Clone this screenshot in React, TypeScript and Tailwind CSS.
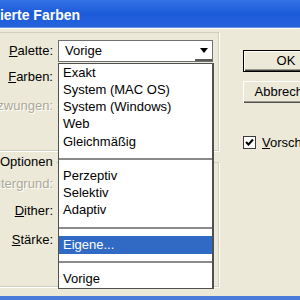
import React from "react";

const items: { t: string; kind?: "sep" | "sel" }[] = [
  { t: "Exakt" },
  { t: "System (MAC OS)" },
  { t: "System (Windows)" },
  { t: "Web" },
  { t: "Gleichmäßig" },
  { t: "", kind: "sep" },
  { t: "Perzeptiv" },
  { t: "Selektiv" },
  { t: "Adaptiv" },
  { t: "", kind: "sep" },
  { t: "Eigene...", kind: "sel" },
  { t: "", kind: "sep" },
  { t: "Vorige" },
];

function Label({ children, disabled }: { children: React.ReactNode; disabled?: boolean }) {
  return (
    <div className="w-[53px] shrink-0 flex justify-end">
      <span
        className={
          "whitespace-nowrap shrink-0 " +
          (disabled ? "text-[#aca899] [text-shadow:1px_1px_0_#ffffff]" : "text-black")
        }
      >
        {children}
      </span>
    </div>
  );
}

export default function App() {
  return (
    <div className="w-[300px] h-[300px] overflow-hidden relative bg-[#ece9d8] text-[13px] leading-[16px] font-['Liberation_Sans',Arial,sans-serif]">
      {/* title bar */}
      <div className="h-[28px] bg-linear-to-b from-[#3372e6] via-[#1c5bd8] to-[#2563de] flex items-center overflow-hidden border-b border-[#6b95e0]">
        <span className="ml-[-32px] mt-[2px] text-white font-bold text-[14px] whitespace-nowrap">
          Indizierte Farben
        </span>
      </div>

      {/* body */}
      <div className="flex h-[268px] border-t border-white">
        {/* left column */}
        <div className="w-[219px] shrink-0 flex flex-col pt-[3px]">
          {/* group 1 */}
          <div className="w-[223px] -ml-[4px] h-[119px] border border-[#d0d0bf] shadow-[1px_1px_0_#ffffff] pl-[3px] pt-[7px] flex flex-col">
            <div className="h-[22px] flex items-center">
              <Label>
                <span className="underline">P</span>alette:
              </Label>
              <div className="ml-[5px] w-[155px] h-[22px] bg-white border border-[#707070] flex items-center">
                <span className="pl-[6px] flex-1">Vorige</span>
                <div className="w-[17px] h-[20px] bg-white border-b-2 border-[#5a5a5a] flex items-center justify-center">
                  <svg width="8" height="5" viewBox="0 0 8 5">
                    <polygon points="0,0 8,0 4,5" fill="#000" />
                  </svg>
                </div>
              </div>
            </div>
            <div className="h-[22px] mt-[4px] flex items-center">
              <Label>
                <span className="underline">F</span>arben:
              </Label>
            </div>
            <div className="h-[22px] mt-[7px] flex items-center">
              <Label disabled>Erzwungen:</Label>
            </div>
          </div>

          {/* group 2 */}
          <div className="w-[223px] -ml-[4px] mt-[11px] h-[125px] border border-[#d0d0bf] shadow-[1px_1px_0_#ffffff] pl-[3px] flex flex-col">
            <div className="-mt-[9px] h-[16px] flex">
              <span className="bg-[#ece9d8] pr-[3px] whitespace-nowrap">Optionen</span>
            </div>
            <div className="h-[22px] mt-[3px] flex items-center">
              <Label disabled>Hintergrund:</Label>
            </div>
            <div className="h-[22px] mt-[5px] flex items-center">
              <Label>
                <span className="underline">D</span>ither:
              </Label>
            </div>
            <div className="h-[22px] mt-[7px] flex items-center">
              <Label>
                <span className="underline">S</span>tärke:
              </Label>
            </div>
          </div>
        </div>

        {/* right column */}
        <div className="flex-1 flex flex-col pl-[24px]">
          <button className="mt-[21px] w-[86px] h-[22px] shrink-0 bg-[#ece9d8] border border-black shadow-[inset_1px_1px_0_#ffffff,inset_-1px_-1px_0_#404040,inset_-2px_-2px_0_#9a9a8c] flex items-center justify-center">
            OK
          </button>
          <button className="mt-[9px] w-[86px] h-[22px] shrink-0 bg-[#ece9d8] shadow-[inset_1px_1px_0_#ffffff,inset_-1px_-1px_0_#505050,inset_-2px_-2px_0_#9a9a8c] flex items-center justify-center whitespace-nowrap">
            Abbrechen
          </button>
          <div className="mt-[33px] h-[13px] flex items-center gap-[6px]">
            <div className="w-[13px] h-[13px] bg-white border border-[#3a3a3a] flex items-center justify-center shrink-0">
              <svg width="9" height="9" viewBox="0 0 9 9">
                <path d="M1 4 L3.5 6.5 L8 1.5" stroke="#000" strokeWidth="2" fill="none" />
              </svg>
            </div>
            <span className="whitespace-nowrap">
              <span className="underline">V</span>orschau
            </span>
          </div>
        </div>
      </div>

      {/* bottom frame */}
      <div className="h-[4px] bg-[#4a7ada]" />

      {/* open dropdown list */}
      <div className="absolute left-[58px] top-[63px] w-[156px] h-[226px] bg-white border border-[#505050] border-r-2 flex flex-col">
        {items.map((it, i) =>
          it.kind === "sep" ? (
            <div key={i} className="flex-1 flex items-center">
              <div className="h-[2px] w-full bg-[#8a8a8a]" />
            </div>
          ) : (
            <div
              key={i}
              className={
                "flex-1 flex items-center pl-[4px] whitespace-nowrap " +
                (it.kind === "sel" ? "bg-[#316ac5] text-white" : "text-black")
              }
            >
              {it.t}
            </div>
          )
        )}
      </div>
    </div>
  );
}
